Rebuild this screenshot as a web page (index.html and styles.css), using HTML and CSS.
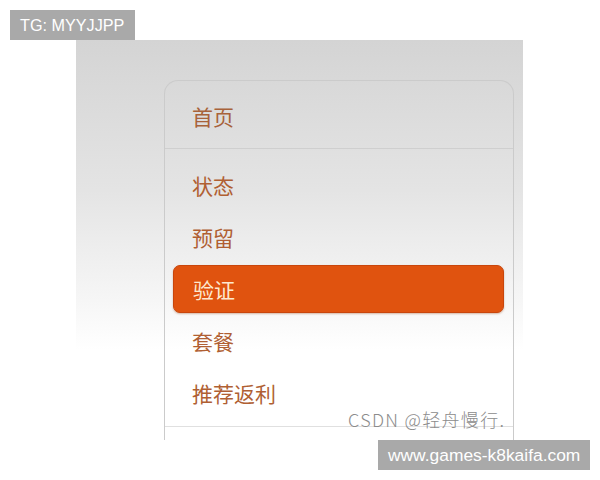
FILE: index.html
```html
<!DOCTYPE html>
<html lang="zh-CN">
<head>
<meta charset="utf-8">
<title>菜单</title>
<link rel="stylesheet" href="styles.css">
</head>
<body>
<div class="tg">TG: MYYJJPP</div>
<div class="shot">
  <div class="card">
    <div class="header">首页</div>
    <ul class="menu">
      <li class="item">状态</li>
      <li class="item">预留</li>
      <li class="item active"><span class="pill">验证</span></li>
      <li class="item">套餐</li>
      <li class="item">推荐返利</li>
    </ul>
    <div class="foot"></div>
  </div>
  <div class="mark">CSDN @轻舟慢行.</div>
</div>
<div class="site">www.games-k8kaifa.com</div>
</body>
</html>
```
FILE: styles.css
```css
html, body {
  margin: 0;
  padding: 0;
  background: #ffffff;
  width: 600px;
  height: 480px;
  overflow: hidden;
  font-family: "Noto Sans CJK SC", "Noto Sans", sans-serif;
}
.tg {
  margin: 10px 0 0 10px;
  width: 125px;
  height: 30px;
  box-sizing: border-box;
  padding-left: 10px;
  background: #a9a9a9;
  color: #ffffff;
  font-family: "Liberation Sans", Arial, sans-serif;
  font-size: 16.2px;
  line-height: 30px;
}
.shot {
  position: relative;
  margin-left: 76px;
  width: 447px;
  height: 400px;
  box-sizing: border-box;
  padding: 40px 0 0 88px;
  background: linear-gradient(to bottom, #d4d4d4 0px, #e4e4e4 150px, #f6f6f6 260px, #ffffff 310px, #ffffff 400px);
}
.card {
  width: 350px;
  height: 360px;
  box-sizing: border-box;
  border: 1px solid #cbcbcb;
  border-bottom: none;
  border-radius: 14px 14px 0 0;
  display: flex;
  flex-direction: column;
}
.header {
  height: 68px;
  box-sizing: border-box;
  border-bottom: 1px solid #cfcfcf;
  padding-left: 27px;
  font-size: 21px;
  line-height: 70px;
  color: #a8623a;
}
.menu {
  list-style: none;
  margin: 10px 0 0 0;
  padding: 0;
}
.item {
  height: 52px;
  padding-left: 27px;
  font-size: 21px;
  line-height: 52px;
  color: #b05f33;
}
.item.active {
  padding: 2px 9px 2px 8px;
  box-sizing: border-box;
}
.pill {
  display: block;
  height: 48px;
  box-sizing: border-box;
  padding-left: 19px;
  line-height: 46px;
  border-radius: 7px;
  background: #e0530f;
  border: 1px solid #c9460c;
  color: #fde9cf;
  box-shadow: 0 1px 2px rgba(150, 60, 10, 0.35);
}
.foot {
  margin-top: 7px;
  border-top: 1px solid #e0e0e0;
}
.mark {
  position: absolute;
  left: 272px;
  top: 366px;
  font-size: 18px;
  color: #8c8c8c;
  letter-spacing: 1.3px;
  font-weight: 300;
}
.site {
  margin-left: 378px;
  width: 212px;
  height: 30px;
  box-sizing: border-box;
  padding-left: 10px;
  background: #a9a9a9;
  color: #ffffff;
  font-family: "Liberation Sans", Arial, sans-serif;
  font-size: 17.4px;
  line-height: 30px;
}
```
